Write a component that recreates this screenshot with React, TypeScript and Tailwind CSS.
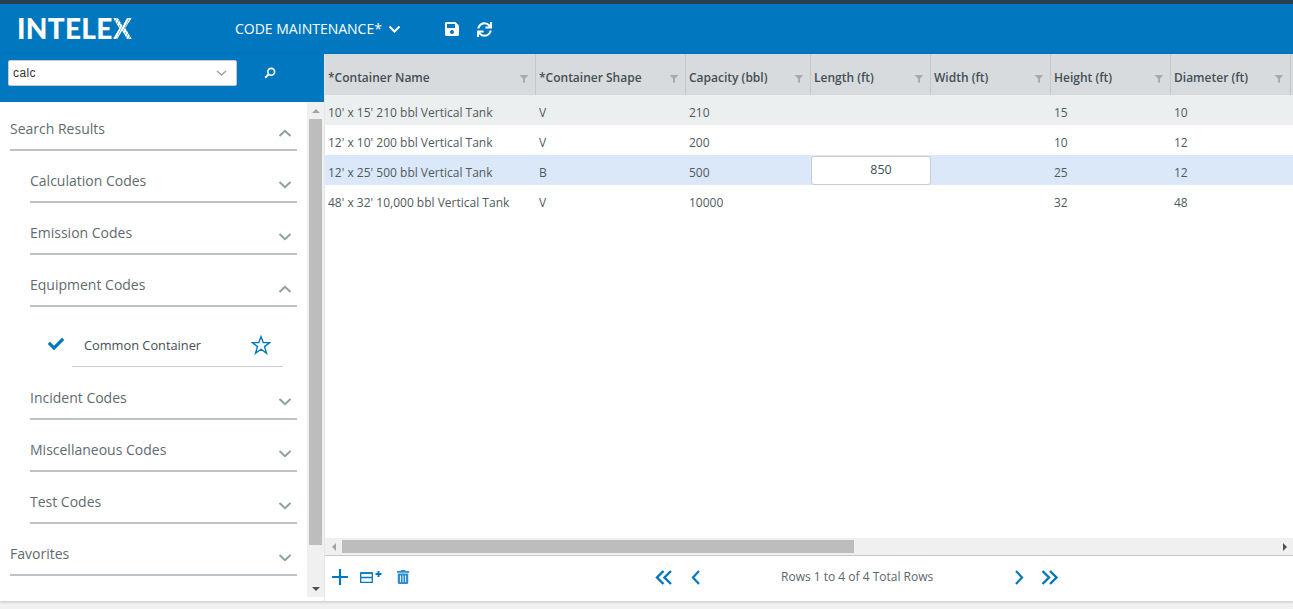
import { FaSave, FaSync, FaCheck, FaTrashAlt, FaFilter } from "react-icons/fa";

const Chev = ({ d, w = 14, h = 8, color = "#8fa0a3", sw = 2, className = "" }: { d: string; w?: number; h?: number; color?: string; sw?: number; className?: string }) => (
  <svg width={w} height={h} viewBox={`0 0 ${w} ${h}`} className={className} fill="none">
    <path d={d} stroke={color} strokeWidth={sw} />
  </svg>
);
const Down = () => <Chev d="M1.5 1 L7 6.2 L12.5 1" />;
const Up = () => <Chev d="M1.5 7 L7 1.8 L12.5 7" />;

const Group = ({ label, open = false, top = false }: { label: string; open?: boolean; top?: boolean }) => (
  <div className={`flex justify-between border-b-2 border-[#bcc3c6] text-[14px] text-[#5f6b70] ${top ? "ml-[10px]" : "ml-[30px]"} h-[52px] pr-[5px]`}>
    <span className="mt-[20px] leading-[20px]">{label}</span>
    <span className="mt-[30px]">{open ? <Up /> : <Down />}</span>
  </div>
);

const cols = [
  ["*Container Name", "w-[211px]"],
  ["*Container Shape", "w-[150px]"],
  ["Capacity (bbl)", "w-[125px]"],
  ["Length (ft)", "w-[120px]"],
  ["Width (ft)", "w-[120px]"],
  ["Height (ft)", "w-[120px]"],
  ["Diameter (ft)", "w-[120px]"],
];
const rows = [
  ["10' x 15' 210 bbl Vertical Tank", "V", "210", "", "", "15", "10"],
  ["12' x 10' 200 bbl Vertical Tank", "V", "200", "", "", "10", "12"],
  ["12' x 25' 500 bbl Vertical Tank", "B", "500", "850", "", "25", "12"],
  ["48' x 32' 10,000 bbl Vertical Tank", "V", "10000", "", "", "32", "48"],
];
const rowBg = ["bg-[#ebefef]", "bg-white", "bg-[#dae8fa]", "bg-white"];

export default function App() {
  return (
    <div className="w-[1293px] h-[609px] overflow-hidden bg-[#f1f1f1] flex flex-col font-['Open_Sans',sans-serif]">
      <div className="h-[4px] bg-[#2a3f54] shrink-0" />
      <header className="h-[50px] shrink-0 bg-[#0077be] flex items-center text-white">
        <div className="w-[235px] pl-[17px] flex items-center h-full -mt-[1px] pb-[1px]">
          <span className="font-['Lato',sans-serif] font-black text-[28px] tracking-[0.3px] leading-none">INTELE</span>
          <span className="font-['Lato',sans-serif] font-black text-[28px] leading-none bg-[repeating-linear-gradient(115deg,#ffffff_0px,#ffffff_2px,#8cc3e2_2px,#8cc3e2_2.8px)] bg-clip-text text-transparent">X</span>
        </div>
        <span className="text-[14px] leading-none">CODE MAINTENANCE*</span>
        <Chev d="M1.5 1.5 L6.5 6.5 L11.5 1.5" w={13} h={8} color="#ffffff" sw={2} className="ml-[6px]" />
        <FaSave size={16} className="ml-[43px]" />
        <FaSync size={15} className="ml-[17px]" />
      </header>
      <div className="flex h-[547px] shrink-0 shadow-[0_1px_3px_rgba(0,0,0,0.2)]">
        <aside className="w-[325px] shrink-0 flex flex-col">
          <div className="h-[48px] bg-[#0077be] flex items-start pt-[6px] pl-[8px] shrink-0">
            <div className="w-[229px] h-[26px] bg-white border border-[#c5ccd0] rounded-[2px] flex items-center justify-between px-[4px]">
              <span className="text-[12px] tracking-[0.4px] text-[#333] font-['Liberation_Sans',sans-serif]">calc</span>
              <Chev d="M1 1 L5.5 5 L10 1" w={11} h={7} color="#9aa5a9" sw={1.6} className="mr-[5px]" />
            </div>
            <svg width="12" height="12" viewBox="0 0 12 12" className="ml-[27px] mt-[7px]" fill="none">
              <circle cx="7.2" cy="4.8" r="3.4" stroke="#fff" strokeWidth="1.6" />
              <path d="M4.6 7.4 L1.2 10.8" stroke="#fff" strokeWidth="2" />
            </svg>
          </div>
          <div className="flex flex-1 min-h-0 bg-white">
            <div className="w-[307px] shrink-0 pr-[10px]">
              <div className="-mt-[3px]"><Group label="Search Results" open top /></div>
              <Group label="Calculation Codes" />
              <Group label="Emission Codes" />
              <Group label="Equipment Codes" open />
              <div className="h-[60px] ml-[72px] mr-[14px] border-b border-[#c8cdd0] relative flex items-center pt-[18px] text-[12.8px] text-[#444f55]">
                <FaCheck size={16} className="absolute -left-[24px] top-[29px] text-[#0077be]" />
                <span className="ml-[12px]">Common Container</span>
                <svg width="20" height="20" viewBox="0 0 20 20" fill="none" className="absolute right-[12px] top-[28px]">
                  <path d="M10 1.6 L12.2 7.6 L18.8 7.6 L13.5 11.6 L15.5 18.2 L10 14.3 L4.5 18.2 L6.5 11.6 L1.2 7.6 L7.8 7.6 Z" stroke="#0077be" strokeWidth="1.4" strokeLinejoin="miter" />
                </svg>
              </div>
              <div className="h-[1px]" />
              <Group label="Incident Codes" />
              <Group label="Miscellaneous Codes" />
              <Group label="Test Codes" />
              <Group label="Favorites" top />
            </div>
            <div className="w-[17px] h-[495px] bg-[#f0f0f0] flex flex-col items-center shrink-0">
              <div className="h-[17px] flex items-center justify-center">
                <div className="w-0 h-0 border-x-[4px] border-x-transparent border-b-[4px] border-b-[#a3a3a3]" />
              </div>
              <div className="w-[13px] h-[426px] bg-[#bdbdbd]" />
              <div className="flex-1" />
              <div className="h-[17px] flex items-center justify-center">
                <div className="w-0 h-0 border-x-[4px] border-x-transparent border-t-[4px] border-t-[#505050]" />
              </div>
            </div>
          </div>
        </aside>
        <main className="flex-1 min-w-0 flex flex-col bg-white border-l border-[#e4e6e7] -ml-[1px]">
          <div className="flex-1 min-h-0 overflow-hidden">
            <div className="flex h-[41px] bg-[#d7dbdd] text-[12px] font-semibold text-[#444f55]">
              {cols.map(([c, w]) => (
                <div key={c} className={`${w} shrink-0 border-r border-[#c4c9cb] pl-[3px] pr-[7px] flex items-center justify-between pt-[6px]`}>
                  <span>{c}</span>
                  <FaFilter size={8} className="text-[#a6acae] mt-[2px]" />
                </div>
              ))}
            </div>
            {rows.map((r, i) => (
              <div key={i} className={`flex h-[30px] ${rowBg[i]} text-[12px] text-[#4f5a60]`}>
                {r.map((v, j) => (
                  <div key={j} className={`${cols[j][1]} shrink-0 pl-[3px] flex items-center`}>
                    {v === "850" ? (
                      <div className="-ml-[3px] w-[120px] h-[29px] bg-white border border-[#c9cdd0] rounded-[3px] flex items-center justify-center text-[12.5px] text-[#444f55] pl-[20px]">{v}</div>
                    ) : (
                      <span className="pt-[6px]">{v}</span>
                    )}
                  </div>
                ))}
              </div>
            ))}
          </div>
          <div className="h-[18px] shrink-0 bg-[#f0f0f0] border-b border-[#c8c8c8] flex items-center justify-between">
            <div className="flex items-center h-full flex-1">
              <div className="w-[17px] flex justify-center">
                <div className="w-0 h-0 border-y-[4px] border-y-transparent border-r-[4px] border-r-[#a3a3a3]" />
              </div>
              <div className="w-[512px] h-[13px] bg-[#bdbdbd]" />
            </div>
            <div className="w-[17px] flex justify-center">
              <div className="w-0 h-0 border-y-[4px] border-y-transparent border-l-[4px] border-l-[#505050]" />
            </div>
          </div>
          <div className="h-[45px] shrink-0 flex items-center bg-white text-[#0077be] pb-[3px]">
            <svg width="16" height="16" viewBox="0 0 16 16" className="ml-[7px]" fill="none">
              <path d="M8 0 V16 M0 8 H16" stroke="#0077be" strokeWidth="2.2" />
            </svg>
            <svg width="22" height="12" viewBox="0 0 22 12" className="ml-[12px]" fill="none">
              <path d="M0.7 1.8 H12.3 V11.3 H0.7 Z M0.7 6.5 H12.3" stroke="#0077be" strokeWidth="1.3" />
              <path d="M0.7 2.2 H12.3" stroke="#0077be" strokeWidth="1.4" />
              <path d="M18.5 0 V6 M15.5 3 H21.5" stroke="#0077be" strokeWidth="1.9" />
            </svg>
            <FaTrashAlt size={14} className="ml-[14px] text-[#2e8ccb]" />
            <Chev d="M8.5 1 L2 7.5 L8.5 14 M16 1 L9.5 7.5 L16 14" w={18} h={15} color="#0077be" sw={2.4} className="ml-[245px]" />
            <Chev d="M8 1 L2 7.5 L8 14" w={10} h={15} color="#0077be" sw={2.2} className="ml-[18px]" />
            <span className="ml-[80px] w-[231px] text-[12px] text-[#5a666c]">Rows 1 to 4 of 4 Total Rows</span>
            <Chev d="M2 1 L8 7.5 L2 14" w={10} h={15} color="#0077be" sw={2.2} className="ml-[2px]" />
            <Chev d="M1.5 1 L8 7.5 L1.5 14 M9 1 L15.5 7.5 L9 14" w={18} h={15} color="#0077be" sw={2.4} className="ml-[17px]" />
          </div>
        </main>
      </div>
    </div>
  );
}
